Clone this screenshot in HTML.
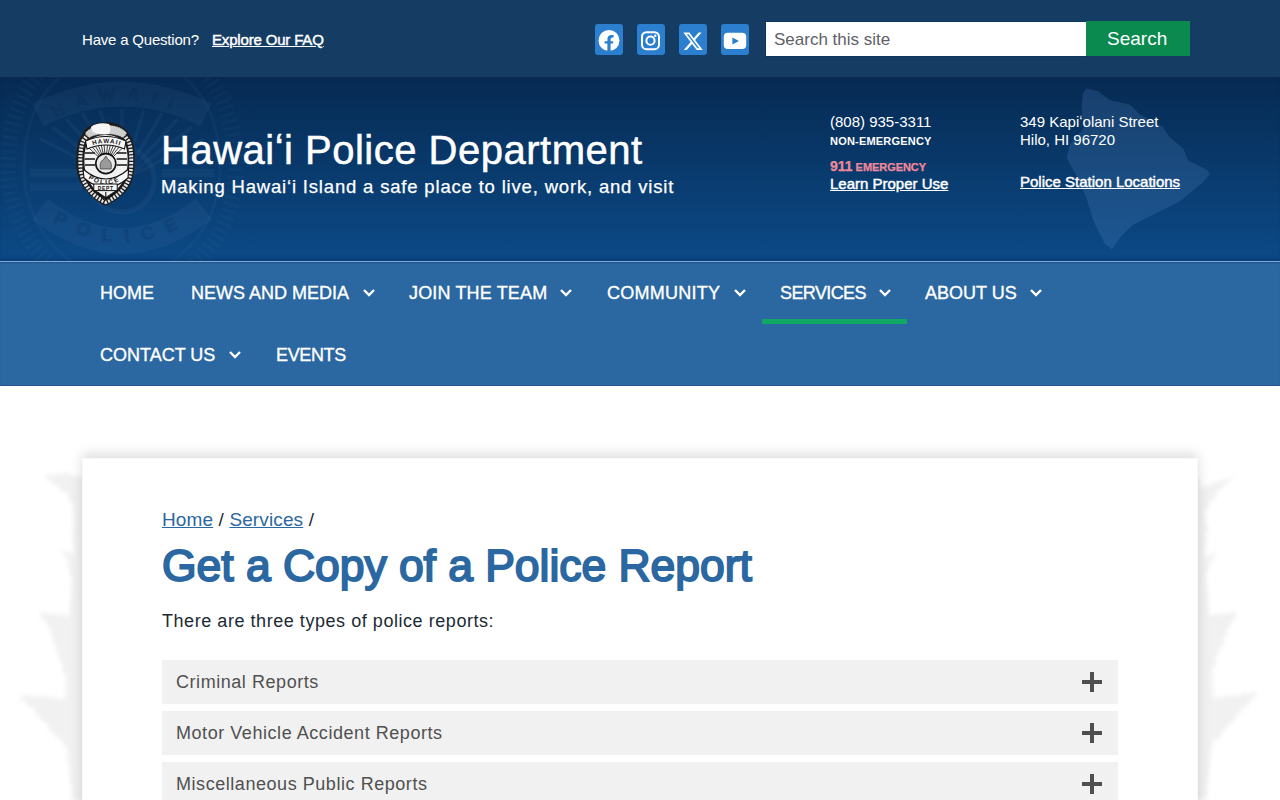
<!DOCTYPE html>
<html><head><meta charset="utf-8">
<style>
*{box-sizing:border-box;margin:0;padding:0}
html,body{width:1280px;height:800px;overflow:hidden;background:#fff;font-family:"Liberation Sans",sans-serif}
.abs{position:absolute;white-space:nowrap}
#top{position:absolute;left:0;top:0;width:1280px;height:77px;background:#153d63}
.soc{position:absolute;top:24px;width:28px;height:31px}
#search{position:absolute;left:765px;top:21px;width:322px;height:36px;background:#fff;border:1px solid #0c3560}
#sbtn{position:absolute;left:1086px;top:21px;width:104px;height:35px;background:#0a8a4f}
#hdr{position:absolute;left:0;top:77px;width:1280px;height:184px;background:linear-gradient(#062a52,#0c4a87);overflow:hidden;box-shadow:inset 0 -5px 5px -3px rgba(0,20,50,.25)}
#hline{position:absolute;left:0;top:261px;width:1280px;height:1px;background:#79a9dd}
#nav{position:absolute;left:0;top:262px;width:1280px;height:124px;background:#2b67a1;box-shadow:inset 0 -1px 0 #245a8e,inset 0 2px 2px -1px rgba(0,30,70,.25)}
.ni{position:absolute;font-size:18px;color:#fff;white-space:nowrap;-webkit-text-stroke:.35px #fff}
.chev{position:absolute;width:14px;height:9px}
#ul{position:absolute;left:762px;top:319px;width:145px;height:5px;background:#10a862}
#card{position:absolute;left:82px;top:458px;width:1116px;height:400px;background:#fff;box-shadow:0 -4px 12px rgba(0,0,0,.14),inset 0 0 0 1px rgba(0,0,0,.025)}
.acc{position:absolute;left:162px;width:956px;height:44px;background:#f1f1f1}
.acc span{position:absolute;left:14px;top:12px;font-size:18px;color:#505050;white-space:nowrap;letter-spacing:.55px}
.plus{position:absolute;left:920px;top:12px;width:20px;height:20px}
.plus:before{content:"";position:absolute;left:0;top:8px;width:20px;height:4px;background:#4f4f4f}
.plus:after{content:"";position:absolute;left:8px;top:0;width:4px;height:20px;background:#4f4f4f}
.med{-webkit-text-stroke:.45px #fff}
</style></head><body>
<div id="top">
  <div class="abs" style="left:82px;top:31px;font-size:15px;letter-spacing:-.2px;color:#fff">Have a Question?</div>
  <div class="abs med" style="left:212px;top:31px;font-size:15px;letter-spacing:-.17px;color:#fff;text-decoration:underline">Explore Our FAQ</div>
  <svg class="soc" style="left:595px" viewBox="0 0 28 31"><rect width="28" height="31" rx="3" fill="#2b7fce"/><circle cx="14" cy="16.5" r="10.5" fill="#fff"/><path d="M15.6 27V19.6H18.1V17.3H15.6V15.3Q15.6 13.4 17.4 13.4H18.6V11.1H16.9Q12.4 11.1 12.4 15.2V17.3H9.6V19.6H12.4V27Z" fill="#2b7fce"/></svg>
  <svg class="soc" style="left:637px" viewBox="0 0 28 31"><rect width="28" height="31" rx="3" fill="#2b7fce"/><rect x="5" y="8.2" width="17" height="17" rx="4.5" fill="none" stroke="#fff" stroke-width="2"/><circle cx="13.5" cy="16.7" r="4.1" fill="none" stroke="#fff" stroke-width="2"/><circle cx="18.3" cy="11.8" r="1.2" fill="#fff"/></svg>
  <svg class="soc" style="left:679px" viewBox="0 0 28 31"><rect width="28" height="31" rx="3" fill="#2b7fce"/><g transform="translate(3.2 6.5) scale(0.9)"><path d="M18.244 2.25h3.308l-7.227 8.26 8.502 11.24H16.17l-5.214-6.817L4.99 21.75H1.68l7.73-8.835L1.254 2.25H8.08l4.713 6.231zm-1.161 17.52h1.833L7.084 4.126H5.117z" fill="#fff"/></g></svg>
  <svg class="soc" style="left:721px" viewBox="0 0 28 31"><rect width="28" height="31" rx="3" fill="#2b7fce"/><rect x="2.8" y="8.8" width="22.4" height="16.2" rx="4" fill="#fff"/><path d="M11.4 13.4V20.4L18 16.9Z" fill="#2b7fce"/></svg>
  <div id="search"></div>
  <div class="abs" style="left:774px;top:30px;font-size:17px;color:#5f5f68">Search this site</div>
  <div id="sbtn"></div>
  <div class="abs" style="left:1107px;top:28px;font-size:19px;color:#fff">Search</div>
</div>
<div id="hdr">
  <svg width="1280" height="184" style="position:absolute;left:0;top:0">
    <defs>
      <path id="arcTop" d="M46 46Q122 0 198 46"/>
      <path id="arcBot" d="M46 140Q122 190 198 140"/>
      <clipPath id="wmc"><rect x="0" y="0" width="260" height="184"/></clipPath>
    </defs>
    <g clip-path="url(#wmc)">
      <path d="M122 -40C190 -40 236 10 236 90C236 150 200 200 122 230C44 200 8 150 8 90C8 10 54 -40 122 -40Z" fill="none" stroke="rgba(150,190,240,0.035)" stroke-width="16" stroke-dasharray="3 4"/>
      <path d="M122 -22C178 -22 220 20 220 90C220 145 190 185 122 212C54 185 24 145 24 90C24 20 66 -22 122 -22Z" fill="none" stroke="rgba(150,190,240,0.045)" stroke-width="3"/>
      <path d="M38 38Q122 -4 206 38" fill="none" stroke="rgba(150,190,240,0.06)" stroke-width="25"/>
      <g stroke="rgba(150,190,240,0.05)" stroke-width="3.5" fill="none">
        <path d="M122 103L40 62M122 103L52 50M122 103L66 42M122 103L82 36M122 103L100 33M122 103L122 32M122 103L144 33M122 103L162 36M122 103L178 42M122 103L192 50M122 103L204 62"/>
      </g>
      <g fill="rgba(150,190,240,0.05)"><rect x="30" y="92" width="52" height="8"/><rect x="30" y="106" width="52" height="8"/><rect x="162" y="92" width="52" height="8"/><rect x="162" y="106" width="52" height="8"/></g>
      <circle cx="122" cy="103" r="32" fill="rgba(6,40,80,0.10)" stroke="rgba(150,190,240,0.05)" stroke-width="5"/>
      <path d="M40 132Q122 196 204 132" fill="none" stroke="rgba(150,190,240,0.06)" stroke-width="26"/>
      <text font-size="17" font-weight="bold" fill="rgba(0,25,60,0.11)" stroke="rgba(0,25,60,0.11)" stroke-width="1.2" font-family="Liberation Sans" letter-spacing="12"><textPath href="#arcTop" startOffset="10">HAWAII</textPath></text>
      <text font-size="18" font-weight="bold" fill="rgba(0,25,60,0.11)" stroke="rgba(0,25,60,0.11)" stroke-width="1.2" font-family="Liberation Sans" letter-spacing="13"><textPath href="#arcBot" startOffset="8">POLICE</textPath></text>
    </g>
    <polygon fill="rgba(120,170,230,0.16)" points="1086.2,11.6 1097.8,13.9 1109.4,23.1 1130.2,27.7 1139.4,37.0 1162.5,49.7 1169.5,60.1 1183.4,71.7 1188.0,83.2 1206.5,92.5 1209.9,97.1 1201.8,106.4 1178.7,124.9 1155.6,136.4 1132.5,148.0 1120.9,159.5 1111.7,172.3 1104.7,166.5 1093.2,143.4 1086.2,120.2 1077.0,99.4 1066.6,80.9 1070.1,67.1 1083.9,50.9 1081.6,30.1 1082.8,16.2"/>
  </svg>
</div>
<!-- badge -->
<svg class="abs" style="left:76px;top:121px" width="60" height="86" viewBox="0 0 60 86">
  <defs>
    <path id="bPol" d="M9 55Q30 72 51 55"/>
    <path id="bHaw" d="M12 26Q30 18 48 26"/>
  </defs>
  <path d="M29.8 1C38 1 46 4 51 10L56 18C58.5 24 59 35 58.6 45C58 56 55 64 50.8 69C46 75 38 81 29.8 84.6C21 81 14 75 10 69C5 63 1 56 0.4 45C0 35 1 24 3.5 18L8 10C13 4 21 1 29.8 1Z" fill="#1c1c1c"/>
  <path d="M29.8 6C37 6 44 9 48 14L52.5 20C55 26 55.5 35 55.2 45C54.6 55 52 62 48 67C44 73 37 78 29.8 81C22 78 16 73 12 67C8 62 5 55 4.4 45C4 35 4.6 26 7 20L11.5 14C16 9 22 6 29.8 6Z" fill="none" stroke="#e4e4e4" stroke-width="4" stroke-dasharray="2 1.3"/>
  <path d="M29.8 14C38 14 45 17 49 23C52 30 52 40 51 48C49 58 45 65 39 70L29.8 76L20.6 70C15 65 11 58 9 48C8 40 8 30 11 23C15 17 22 14 29.8 14Z" fill="#f2f2f2"/>
  <g stroke="#151515" stroke-width="0.8">
    <path d="M29.8 42.6L13 27M29.8 42.6L16 25.5M29.8 42.6L19 24.5M29.8 42.6L22 24M29.8 42.6L25 23.5M29.8 42.6L28 23.3M29.8 42.6L31.5 23.3M29.8 42.6L34.5 23.5M29.8 42.6L37.5 24M29.8 42.6L40.5 24.5M29.8 42.6L43.5 25.5M29.8 42.6L46.5 27"/>
  </g>
  <g stroke="#151515" stroke-width="1.3"><path d="M9 32H19M40.6 32H50.6M8.5 38H19M40.6 38H51M9 44H19M40.6 44H51"/></g>
  <path d="M9.5 20Q30 11 50 20L48.5 28Q30 20 11 28Z" fill="#f7f7f7" stroke="#111" stroke-width="1.1"/>
  <text font-size="6.2" font-weight="bold" fill="#111" font-family="Liberation Sans" letter-spacing="1.1"><textPath href="#bHaw" startOffset="5">HAWAII</textPath></text>
  <circle cx="29.8" cy="42.6" r="10" fill="#e9e9e9" stroke="#111" stroke-width="1.6"/>
  <path d="M24.5 48C23.5 44 24.5 40 27.5 38.5L29.8 35L32 38.5C35 40 36 44 35 48Z" fill="#9a9a9a" stroke="#333" stroke-width="0.7"/>
  <path d="M7 48Q30 68 52.6 48L52 57Q30 76 8 57Z" fill="#f7f7f7" stroke="#111" stroke-width="1.1"/>
  <text font-size="6.6" font-weight="bold" fill="#111" font-family="Liberation Sans" letter-spacing="1.6"><textPath href="#bPol" startOffset="4">POLICE</textPath></text>
  <rect x="17.8" y="63" width="23.4" height="6.6" fill="#f7f7f7" stroke="#111" stroke-width="1"/>
  <text x="29.8" y="68.6" font-size="5" font-weight="bold" text-anchor="middle" fill="#111" font-family="Liberation Sans" letter-spacing="0.7">DEPT</text>
  <g stroke="#111" stroke-width="1.1"><path d="M22 71.5L28 79M37.6 71.5L31.6 79M29.8 71V80"/></g>
  <path d="M9 12C14 6 22 4 30 4C38 4 46 6 51 12L47 17C42 14 36 13 30 13C24 13 18 14 13 17Z" fill="#cfcfcf" stroke="#222" stroke-width="0.6" stroke-dasharray="1.5 1"/>
  <path d="M15 6C19 2 27 1.5 33 3C35 6 35 10 33 13C28 14 21 13 17 11C16 9 15 8 15 6Z" fill="#f7f7f7"/>
</svg>
<div class="abs" style="left:161px;top:128px;font-size:40px;letter-spacing:.5px;color:#fff;-webkit-text-stroke:.5px #fff">Hawai&#699;i Police Department</div>
<div class="abs" style="left:161px;top:176px;font-size:18.5px;letter-spacing:.82px;color:#fff;-webkit-text-stroke:.25px #fff">Making Hawai&#699;i Island a safe place to live, work, and visit</div>
<div class="abs" style="left:830px;top:113px;font-size:15px;color:#fff">(808) 935-3311</div>
<div class="abs" style="left:830px;top:135px;font-size:11px;font-weight:bold;letter-spacing:.2px;color:#fff">NON-EMERGENCY</div>
<div class="abs" style="left:830px;top:158px;font-size:14px;font-weight:bold;color:#f0899a;-webkit-text-stroke:.25px #f0899a">911<span style="font-size:11px;margin-left:3px;letter-spacing:-.05px">EMERGENCY</span></div>
<div class="abs med" style="left:830px;top:175px;font-size:15px;color:#fff;text-decoration:underline">Learn Proper Use</div>
<div class="abs" style="left:1020px;top:113px;font-size:15px;color:#fff;line-height:18px">349 Kapi&#699;olani Street<br>Hilo, HI 96720</div>
<div class="abs med" style="left:1020px;top:173px;font-size:15px;color:#fff;text-decoration:underline">Police Station Locations</div>
<div id="hline"></div>
<div id="nav"></div>
<div class="ni" style="left:100px;top:283px">HOME</div>
<div class="ni" style="left:191px;top:283px">NEWS AND MEDIA</div>
<div class="ni" style="left:409px;top:283px;letter-spacing:.15px">JOIN THE TEAM</div>
<div class="ni" style="left:607px;top:283px;letter-spacing:.25px">COMMUNITY</div>
<div class="ni" style="left:780px;top:283px;letter-spacing:-.6px">SERVICES</div>
<div class="ni" style="left:925px;top:283px">ABOUT US</div>
<div class="ni" style="left:100px;top:345px">CONTACT US</div>
<div class="ni" style="left:276px;top:345px;letter-spacing:-.35px">EVENTS</div>
<svg class="chev" style="left:362px;top:288px" viewBox="0 0 14 9"><path d="M2 2L7 7L12 2" fill="none" stroke="#fff" stroke-width="2.4"/></svg>
<svg class="chev" style="left:559px;top:288px" viewBox="0 0 14 9"><path d="M2 2L7 7L12 2" fill="none" stroke="#fff" stroke-width="2.4"/></svg>
<svg class="chev" style="left:733px;top:288px" viewBox="0 0 14 9"><path d="M2 2L7 7L12 2" fill="none" stroke="#fff" stroke-width="2.4"/></svg>
<svg class="chev" style="left:878px;top:288px" viewBox="0 0 14 9"><path d="M2 2L7 7L12 2" fill="none" stroke="#fff" stroke-width="2.4"/></svg>
<svg class="chev" style="left:1029px;top:288px" viewBox="0 0 14 9"><path d="M2 2L7 7L12 2" fill="none" stroke="#fff" stroke-width="2.4"/></svg>
<svg class="chev" style="left:228px;top:350px" viewBox="0 0 14 9"><path d="M2 2L7 7L12 2" fill="none" stroke="#fff" stroke-width="2.4"/></svg>
<div id="ul"></div>
<!-- ferns -->
<svg class="abs" style="left:0;top:386px" width="1280" height="414">
  <defs><filter id="bl"><feGaussianBlur stdDeviation="2.2"/></filter></defs>
  <g fill="#f1f1f1" filter="url(#bl)">
<path d="M90.5 84.5 85.5 86.2 83.8 91.1 80.6 94.2 77.0 97.5 78.6 102.2 75.2 105.6 76.6 110.2 75.7 114.0 72.6 118.1 75.1 122.6 72.0 126.7 74.5 131.2 72.2 135.3 73.9 139.8 73.7 144.0 72.0 148.4 74.2 152.5 71.4 157.0 74.8 161.1 72.8 165.5 75.4 169.7 75.7 174.1 73.0 177.8 74.9 182.1 71.2 185.7 74.1 190.1 71.1 193.8 73.3 198.1 69.8 201.8 72.5 206.1 69.5 209.8 71.7 214.0 68.6 217.9 71.3 222.0 68.9 225.9 70.9 230.0 67.8 233.9 70.5 238.0 67.1 241.9 70.1 246.0 67.2 249.9 69.7 254.0 66.5 257.9 69.3 262.0 66.2 265.9 68.9 270.0 66.6 273.9 68.5 278.0 65.3 281.9 68.1 286.0 65.1 289.9 67.7 294.0 65.1 297.9 67.3 302.0 65.0 305.9 66.9 310.0 63.5 313.9 66.5 318.0 63.7 321.9 66.1 326.0 62.9 329.9 65.7 333.9 62.9 338.2 66.5 341.9 63.9 346.2 67.3 349.9 64.5 354.3 68.1 357.9 66.0 362.2 68.9 365.9 66.2 370.2 69.7 373.9 67.5 378.2 70.5 381.9 67.7 386.3 71.3 389.9 68.5 394.2 72.1 397.9 70.4 402.1 72.9 405.9 71.1 410.1 73.0 413.3 77.2 415.6 81.5 413.3 85.8 416.6 89.3 414.0 91.9 410.0 89.3 406.0 92.1 401.9 89.3 397.9 91.7 393.9 89.3 389.9 92.0 385.8 89.3 381.8 91.8 377.8 89.3 373.8 91.8 369.7 89.3 365.7 92.1 361.7 89.3 357.7 92.1 353.6 89.3 349.6 92.5 345.6 89.3 341.6 92.2 337.5 89.3 333.5 92.5 329.5 89.3 325.5 92.5 321.4 89.3 317.4 92.6 313.4 89.3 309.4 92.2 305.3 89.3 301.3 91.5 297.3 89.3 293.3 92.5 289.2 89.3 285.2 92.6 281.2 89.3 277.2 92.5 273.1 89.3 269.1 92.1 265.1 89.3 261.1 92.3 257.0 89.3 253.0 91.6 249.0 89.3 245.0 92.4 241.0 89.3 236.9 92.1 232.9 89.3 228.9 91.7 224.9 89.3 220.8 91.4 216.8 89.3 212.8 92.4 208.8 89.3 204.7 92.6 200.7 89.3 196.7 91.4 192.7 89.3 188.6 92.4 184.6 89.3 180.6 91.9 176.6 89.3 172.5 91.5 168.5 89.3 164.5 91.7 160.5 89.3 156.4 92.3 152.4 89.3 148.4 92.5 144.4 89.3 140.3 91.4 136.3 89.3 132.3 92.1 128.3 89.3 124.2 91.4 120.2 89.3 116.2 92.3 112.2 89.3 108.1 91.8 104.1 89.3 100.1 92.5 96.1 89.3 92.0 92.6 88.0 90.0 84.0Z"/>
<path d="M45.4 89.5 47.0 94.1 51.9 94.5 53.1 99.6 58.5 99.5 60.1 104.6 65.1 106.2 68.6 109.7 68.8 114.2 72.6 116.7 72.2 121.5 76.6 123.9 75.5 128.3 78.2 131.9 76.9 136.3 79.8 139.9 79.3 143.9 82.2 140.0 80.0 135.6 83.1 131.7 80.7 127.3 83.2 123.3 81.3 118.9 83.7 114.9 82.0 110.6 85.5 106.7 82.7 102.3 85.4 98.3 83.7 94.6 80.4 89.6 74.4 90.6 70.1 88.7 65.6 85.8 61.7 89.3 57.4 87.2 53.4 90.0 49.0 87.7 45.0 90.0Z"/>
<path d="M62.6 163.7 62.2 168.9 66.6 171.7 68.6 175.8 66.9 180.5 70.6 183.8 69.0 188.5 72.6 191.9 71.0 196.9 74.6 200.9 72.9 206.0 76.0 209.3 80.0 212.6 83.3 210.1 85.5 205.8 82.5 202.1 84.5 197.8 81.6 194.1 84.0 189.7 80.7 186.1 82.5 181.8 79.8 178.1 79.7 174.6 77.2 170.5 72.5 170.6 70.5 165.7 65.3 166.6 62.0 164.0Z"/>
<path d="M40.5 226.6 40.8 231.9 45.5 234.1 45.8 239.4 50.6 241.8 50.2 246.9 53.6 250.8 52.7 256.1 56.6 259.8 55.2 264.6 59.0 267.8 58.3 272.4 61.4 275.8 62.6 279.7 62.1 285.4 66.6 288.7 66.0 294.4 70.3 297.4 74.1 301.3 79.6 301.4 83.3 304.0 86.1 299.9 83.3 295.8 85.9 291.6 83.3 287.5 86.2 283.4 83.3 279.3 85.8 275.2 83.3 271.1 86.3 266.9 83.3 262.8 86.3 258.7 83.3 254.6 85.3 250.5 83.3 246.4 85.4 242.2 83.3 238.1 83.9 234.6 80.0 230.8 74.9 232.6 71.1 228.5 65.9 230.7 61.9 227.9 57.3 229.7 53.2 226.6 48.6 228.7 44.6 225.4 40.0 227.0Z"/>
<path d="M19.5 309.5 20.8 314.1 25.5 315.1 26.8 319.7 31.5 320.7 34.5 323.6 35.5 328.3 40.1 330.0 41.0 334.8 45.7 336.4 48.5 339.6 49.2 344.6 54.1 346.0 55.1 350.7 59.7 352.4 62.5 355.5 64.2 360.8 69.5 362.5 70.8 368.2 76.2 369.4 80.5 373.3 85.3 374.0 88.1 369.9 85.3 365.7 88.3 361.6 85.3 357.4 87.7 353.3 85.3 349.1 87.6 345.0 85.3 340.9 88.4 336.7 85.3 332.6 87.6 328.4 85.3 324.3 87.6 320.1 85.9 316.7 82.0 313.6 77.3 315.5 73.4 312.1 68.8 314.4 64.8 311.7 60.2 313.2 56.0 312.7 52.0 310.0 47.7 312.2 43.8 309.6 39.5 311.8 35.6 308.5 31.3 311.3 27.3 308.5 23.1 310.9 19.0 310.0Z"/>
<path d="M1190.5 83.6 1191.5 89.6 1197.2 91.6 1200.6 95.8 1199.8 100.9 1203.1 104.8 1202.0 110.0 1205.7 114.0 1203.1 118.4 1206.2 122.5 1203.4 127.0 1206.8 131.1 1204.5 135.6 1207.4 139.7 1207.7 144.0 1205.1 148.2 1207.1 152.6 1204.7 156.8 1206.5 161.2 1203.6 165.3 1205.9 169.8 1205.7 173.9 1203.8 178.2 1206.5 181.9 1203.8 186.2 1207.3 189.9 1204.6 194.2 1208.1 197.9 1206.2 202.2 1208.9 205.9 1206.9 210.2 1209.7 214.0 1206.8 218.1 1210.1 222.0 1207.4 226.1 1210.5 230.0 1207.6 234.1 1210.9 238.0 1208.6 242.1 1211.3 246.0 1209.3 250.1 1211.7 254.0 1209.5 258.1 1212.1 262.0 1209.2 266.1 1212.5 270.0 1210.3 274.1 1212.9 278.0 1210.6 282.1 1213.3 286.0 1210.9 290.1 1213.7 294.0 1211.3 298.1 1214.1 302.0 1211.7 306.1 1214.5 310.0 1211.5 314.1 1214.9 318.0 1212.9 322.1 1215.3 326.0 1213.5 330.1 1215.7 334.1 1212.0 337.7 1214.9 342.1 1211.3 345.8 1214.1 350.1 1210.4 353.7 1213.3 358.1 1210.3 361.8 1212.5 366.1 1208.8 369.7 1211.7 374.1 1208.1 377.7 1210.9 382.1 1208.2 385.8 1210.1 390.1 1206.7 393.8 1209.3 398.1 1205.8 401.8 1208.5 406.1 1205.2 409.8 1207.0 414.7 1202.8 412.0 1198.5 414.7 1194.2 412.3 1189.3 414.0 1191.8 410.0 1189.3 406.0 1191.6 401.9 1189.3 397.9 1191.4 393.9 1189.3 389.9 1192.1 385.8 1189.3 381.8 1191.7 377.8 1189.3 373.8 1192.4 369.7 1189.3 365.7 1191.4 361.7 1189.3 357.7 1192.5 353.6 1189.3 349.6 1192.2 345.6 1189.3 341.6 1192.5 337.5 1189.3 333.5 1192.5 329.5 1189.3 325.5 1192.5 321.4 1189.3 317.4 1192.1 313.4 1189.3 309.4 1191.3 305.3 1189.3 301.3 1192.3 297.3 1189.3 293.3 1191.5 289.2 1189.3 285.2 1191.7 281.2 1189.3 277.2 1192.2 273.1 1189.3 269.1 1192.0 265.1 1189.3 261.1 1191.9 257.0 1189.3 253.0 1192.6 249.0 1189.3 245.0 1192.1 241.0 1189.3 236.9 1191.8 232.9 1189.3 228.9 1191.7 224.9 1189.3 220.8 1192.5 216.8 1189.3 212.8 1191.9 208.8 1189.3 204.7 1192.4 200.7 1189.3 196.7 1191.8 192.7 1189.3 188.6 1191.6 184.6 1189.3 180.6 1192.0 176.6 1189.3 172.5 1192.4 168.5 1189.3 164.5 1191.5 160.5 1189.3 156.4 1192.4 152.4 1189.3 148.4 1192.5 144.4 1189.3 140.3 1192.4 136.3 1189.3 132.3 1192.4 128.3 1189.3 124.2 1191.3 120.2 1189.3 116.2 1192.1 112.2 1189.3 108.1 1192.5 104.1 1189.3 100.1 1191.4 96.1 1189.3 92.0 1191.7 88.0 1190.0 84.0Z"/>
<path d="M1236.4 90.5 1231.4 91.7 1229.4 96.5 1224.2 97.5 1222.5 102.4 1217.2 104.8 1215.8 110.4 1212.6 114.3 1208.3 117.1 1208.6 122.3 1203.9 125.0 1204.6 130.2 1201.7 133.7 1202.6 138.2 1199.6 141.7 1199.3 146.1 1201.1 141.7 1198.5 137.7 1200.3 133.3 1197.7 129.3 1199.4 124.9 1196.9 120.9 1199.8 116.4 1196.1 112.5 1198.8 108.0 1195.7 103.4 1201.1 103.3 1204.7 99.4 1210.3 99.8 1213.8 95.4 1218.9 96.5 1222.6 93.0 1227.7 94.1 1231.4 90.6 1236.0 90.0Z"/>
<path d="M1218.6 162.3 1214.4 165.2 1214.6 170.3 1212.6 174.2 1208.5 177.2 1209.6 182.2 1205.5 185.3 1206.6 190.2 1203.3 193.6 1204.6 198.2 1201.5 201.6 1202.0 206.7 1195.4 205.8 1198.7 202.4 1197.4 197.8 1200.4 194.4 1199.4 189.8 1203.0 186.5 1201.4 181.8 1205.2 178.5 1203.6 173.5 1208.7 172.4 1210.6 167.5 1215.4 166.1 1218.0 162.0Z"/>
<path d="M1240.6 224.3 1236.2 227.2 1235.6 232.3 1231.0 235.0 1230.6 240.2 1226.4 243.2 1227.4 248.2 1223.0 251.1 1224.2 256.2 1222.6 260.2 1218.7 263.3 1219.4 268.2 1215.0 271.1 1216.2 276.2 1214.6 280.3 1210.0 283.6 1210.6 289.3 1206.3 292.7 1206.3 298.6 1200.1 299.4 1195.3 304.0 1198.0 299.9 1195.3 295.8 1198.2 291.6 1195.3 287.5 1197.9 283.4 1195.3 279.3 1198.2 275.2 1195.3 271.1 1197.9 266.9 1195.3 262.8 1197.6 258.7 1195.3 254.6 1198.0 250.5 1195.3 246.4 1198.2 242.2 1195.3 238.1 1195.8 233.4 1200.4 234.2 1203.8 231.0 1208.5 232.2 1211.8 228.6 1215.9 227.3 1220.3 229.2 1223.9 226.0 1228.4 228.4 1231.9 224.7 1236.4 227.2 1240.0 224.0Z"/>
<path d="M1261.5 305.5 1256.7 306.7 1255.5 311.5 1250.2 312.2 1249.5 317.5 1246.5 320.4 1241.4 321.6 1240.9 326.8 1236.3 328.5 1235.3 333.2 1232.5 336.4 1227.7 337.9 1226.9 342.8 1222.5 344.6 1221.3 349.2 1218.5 352.4 1213.4 353.6 1212.9 358.8 1207.9 360.2 1207.3 365.2 1204.3 368.6 1197.7 368.9 1193.3 374.0 1196.4 369.9 1193.3 365.7 1196.2 361.6 1193.3 357.4 1196.3 353.3 1193.3 349.1 1196.1 345.0 1193.3 340.9 1195.5 336.7 1193.3 332.6 1196.1 328.4 1193.3 324.3 1195.3 320.1 1193.9 315.4 1198.3 316.7 1201.9 313.9 1206.4 316.1 1209.9 312.4 1214.3 313.6 1217.9 310.9 1222.3 312.2 1225.9 309.3 1230.6 310.8 1234.7 308.1 1239.5 310.6 1243.4 306.8 1248.1 308.4 1252.2 305.6 1256.8 307.0 1261.0 305.0Z"/>
</g>
</svg>
<div id="card"></div>
<div class="abs" style="left:162px;top:509px;font-size:19px;letter-spacing:.12px;color:#2b67a1"><u>Home</u> <span style="color:#1b2a35">/</span> <u>Services</u> <span style="color:#1b2a35">/</span></div>
<div class="abs" style="left:162px;top:541px;font-size:44.5px;letter-spacing:-.05px;-webkit-text-stroke:1.9px #2b67a1;color:#2b67a1">Get a Copy of a Police Report</div>
<div class="abs" style="left:162px;top:611px;font-size:18px;letter-spacing:.55px;color:#1b2a35">There are three types of police reports:</div>
<div class="acc" style="top:660px"><span>Criminal Reports</span><i class="plus"></i></div>
<div class="acc" style="top:711px"><span>Motor Vehicle Accident Reports</span><i class="plus"></i></div>
<div class="acc" style="top:762px"><span>Miscellaneous Public Reports</span><i class="plus"></i></div>
</body></html>
